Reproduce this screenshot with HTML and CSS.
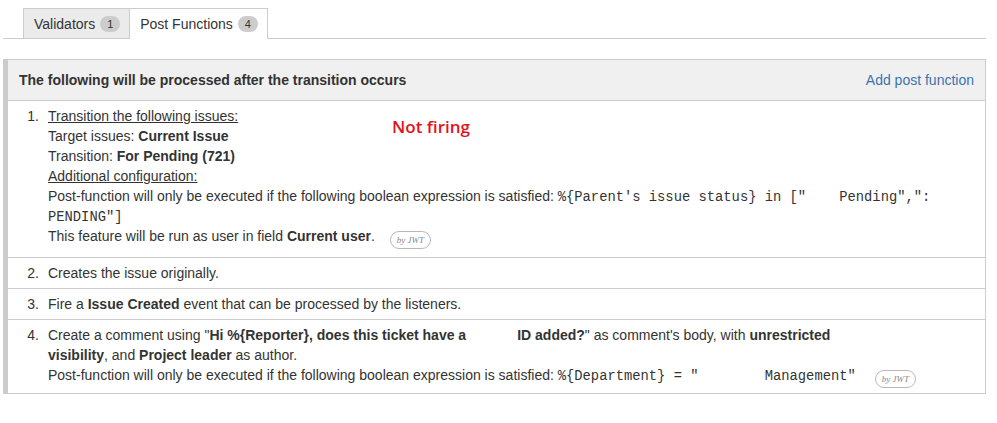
FILE: index.html
```html
<!DOCTYPE html>
<html>
<head>
<meta charset="utf-8">
<link rel="stylesheet" href="styles.css">
</head>
<body>
<div class="page">
  <div class="tabs">
    <div class="tab">Validators <span class="count">1</span></div>
    <div class="tab active">Post Functions <span class="count">4</span></div>
  </div>

  <div class="panel">
    <div class="panel-head">
      <span class="head-title">The following will be processed after the transition occurs</span>
      <a class="head-link" href="#">Add post function</a>
    </div>
    <ol class="rows">
      <li class="row">
        <span class="num">1.</span>
        <div class="body">
          <div class="u">Transition the following issues:</div>
          <div>Target issues: <b>Current Issue</b></div>
          <div>Transition: <b>For Pending (721)</b></div>
          <div class="u">Additional configuration:</div>
          <div>Post-function will only be executed if the following boolean expression is satisfied: <code>%{Parent's issue status} in ["    Pending",":</code><br><code>PENDING"]</code></div>
          <div>This feature will be run as user in field <b>Current user</b>. <span class="jwt">by JWT</span></div>
        </div>
        <span class="note">Not firing</span>
      </li>
      <li class="row">
        <span class="num">2.</span>
        <div class="body">Creates the issue originally.</div>
      </li>
      <li class="row">
        <span class="num">3.</span>
        <div class="body">Fire a <b>Issue Created</b> event that can be processed by the listeners.</div>
      </li>
      <li class="row">
        <span class="num">4.</span>
        <div class="body">
          <div>Create a comment using "<b>Hi %{Reporter}, does this ticket have a<span class="blank"></span>ID added?</b>" as comment's body, with <b>unrestricted</b><br><b>visibility</b>, and <b>Project leader</b> as author.</div>
          <div>Post-function will only be executed if the following boolean expression is satisfied: <code>%{Department} = "        Management"</code> <span class="jwt">by JWT</span></div>
        </div>
      </li>
    </ol>
  </div>
</div>
</body>
</html>
```
FILE: styles.css
```css
html, body {
  margin: 0;
  padding: 0;
  background: #fff;
}
body {
  font-family: "Liberation Sans", Arial, sans-serif;
  font-size: 14px;
  color: #333;
}
.page {
  padding: 8px 11px 0 3px;
}
.tabs {
  display: flex;
  padding-left: 20px;
  border-bottom: 1px solid #ccc;
  height: 30px;
}
.tab {
  display: flex;
  align-items: center;
  gap: 5px;
  height: 29px;
  padding: 0 9px 0 10px;
  background: #ebebeb;
  border: 1px solid #ccc;
  border-bottom: none;
  color: #333;
  line-height: 20px;
}
.tab + .tab {
  border-left: none;
}
.tab.active {
  background: #fff;
  height: 30px;
  margin-bottom: -1px;
}
.count {
  display: inline-block;
  min-width: 8px;
  padding: 0 6px;
  height: 16px;
  line-height: 16px;
  border-radius: 8px;
  background: #ccc;
  color: #333;
  font-size: 11px;
  text-align: center;
}
.panel {
  margin-top: 20px;
  border: 1px solid #ccc;
  border-left: 5px solid #ccc;
}
.panel-head {
  display: flex;
  justify-content: space-between;
  align-items: center;
  height: 40px;
  padding: 0 11px 0 11px;
  background: #f0f0f0;
  border-bottom: 1px solid #ccc;
}
.head-title {
  font-weight: bold;
}
.head-link {
  color: #3b73af;
  text-decoration: none;
}
.rows {
  list-style: none;
  margin: 0;
  padding: 0;
}
.row {
  position: relative;
  display: flex;
  padding: 5px 0 5px 0;
  line-height: 20px;
  border-top: 1px solid #ccc;
}
.row:first-child {
  border-top: none;
  padding-bottom: 8px;
}
.num {
  width: 31px;
  padding-right: 9px;
  text-align: right;
  flex: none;
}
.body {
  flex: 1;
}
.u {
  text-decoration: underline;
}
code {
  font-family: "Liberation Mono", "Courier New", monospace;
  font-size: 13.8px;
  line-height: 14px;
  white-space: pre;
  color: #333;
}
.blank {
  display: inline-block;
  width: 51px;
}
.jwt {
  display: inline-block;
  margin-left: 11px;
  height: 16px;
  line-height: 16px;
  padding: 0 6px;
  border: 1px solid #b8b8c4;
  border-radius: 9px;
  font-family: "Liberation Serif", "Times New Roman", serif;
  font-style: italic;
  font-size: 9px;
  color: #888;
  vertical-align: -2px;
}
.row:last-child .jwt {
  margin-left: 15px;
}
.note {
  position: absolute;
  left: 384px;
  top: 15px;
  font-family: "Open Sans", sans-serif;
  font-weight: 600;
  font-size: 17px;
  line-height: 22px;
  color: #e3131c;
}
```
